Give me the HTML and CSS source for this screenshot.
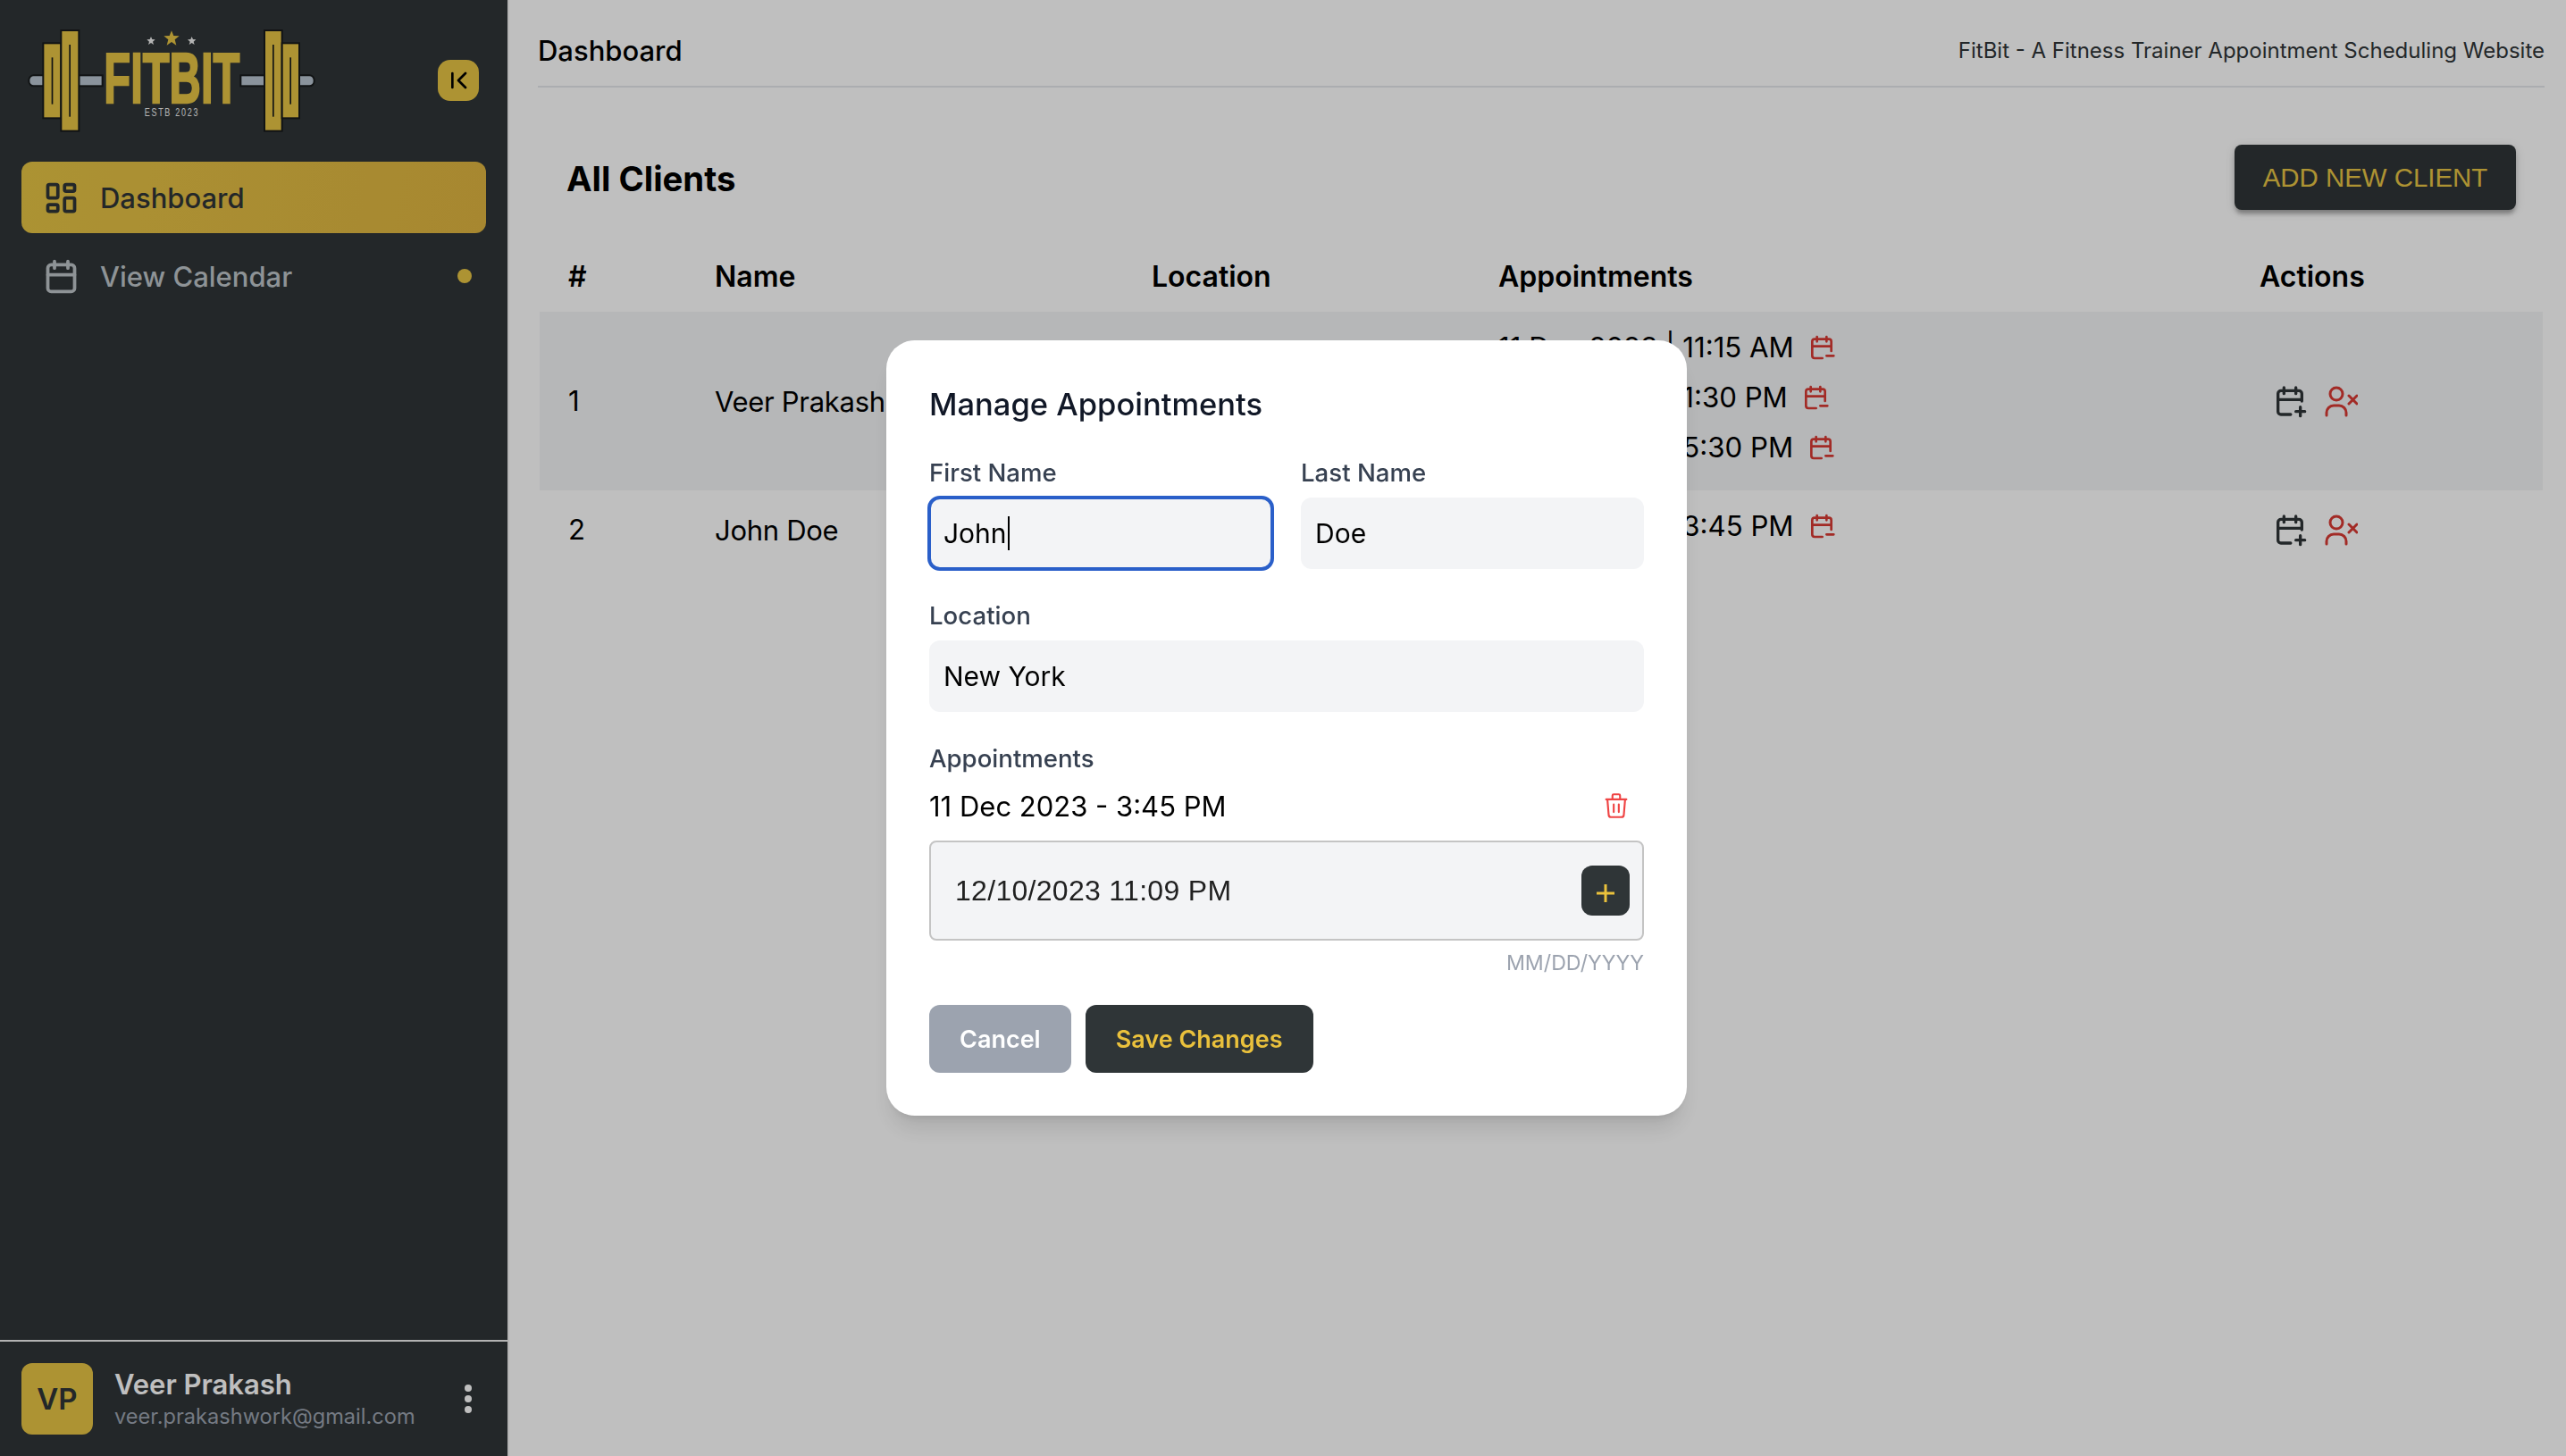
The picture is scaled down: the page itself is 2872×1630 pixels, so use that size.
FILE: index.html
```html
<!DOCTYPE html>
<html lang="en">
<head>
<meta charset="utf-8">
<title>FitBit</title>
<link rel="stylesheet" href="styles.css">
</head>
<body>
<div class="app">
  <aside class="sidebar">
    <div class="brand">
      <svg class="logo" viewBox="0 0 1020 420" aria-label="FitBit logo">
        <g class="logo-bar">
          <rect x="37" y="193" width="60" height="36" rx="16"/>
          <rect x="205" y="193" width="79" height="36"/>
          <rect x="748" y="193" width="80" height="36"/>
          <rect x="930" y="193" width="65" height="36" rx="16"/>
        </g>
        <g class="logo-plate">
          <rect x="85" y="85" width="60" height="252"/>
          <rect x="145" y="42" width="60" height="338"/>
          <rect x="828" y="42" width="59" height="338"/>
          <rect x="887" y="85" width="58" height="252"/>
        </g>
        <g class="logo-slot">
          <rect x="113" y="133" width="5" height="157"/>
          <rect x="172" y="90" width="5" height="242"/>
          <rect x="855" y="90" width="5" height="242"/>
          <rect x="913" y="133" width="5" height="157"/>
        </g>
        <polygon class="star-gold" points="516,43 523,60 542,61 527,73 532,92 516,81 500,92 505,73 490,61 509,60"/>
        <polygon class="star-grey" points="447,63 451,72 461,73 453,80 456,90 447,84 438,90 441,80 433,73 443,72"/>
        <polygon class="star-grey" points="584,63 588,72 598,73 590,80 593,90 584,84 575,90 578,80 570,73 580,72"/>
        <text class="logo-name" x="289" y="284" textLength="456" lengthAdjust="spacingAndGlyphs">FITBIT</text>
        <text class="logo-est" x="425" y="331" textLength="185" lengthAdjust="spacingAndGlyphs">ESTB 2023</text>
      </svg>
      <button class="collapse">
        <svg class="icon-collapse" viewBox="0 0 24 24"><path d="M7 6v12M18 6l-6 6l6 6"/></svg>
      </button>
    </div>
    <nav class="nav">
      <a class="nav-item active">
        <svg class="nav-icon" viewBox="0 0 24 24"><path d="M5 4h4a1 1 0 0 1 1 1v6a1 1 0 0 1-1 1H5a1 1 0 0 1-1-1V5a1 1 0 0 1 1-1z"/><path d="M5 16h4a1 1 0 0 1 1 1v2a1 1 0 0 1-1 1H5a1 1 0 0 1-1-1v-2a1 1 0 0 1 1-1z"/><path d="M15 12h4a1 1 0 0 1 1 1v6a1 1 0 0 1-1 1h-4a1 1 0 0 1-1-1v-6a1 1 0 0 1 1-1z"/><path d="M15 4h4a1 1 0 0 1 1 1v2a1 1 0 0 1-1 1h-4a1 1 0 0 1-1-1V5a1 1 0 0 1 1-1z"/></svg>
        <span>Dashboard</span>
      </a>
      <a class="nav-item">
        <svg class="nav-icon" viewBox="0 0 24 24"><path d="M4 7a2 2 0 0 1 2-2h12a2 2 0 0 1 2 2v12a2 2 0 0 1-2 2H6a2 2 0 0 1-2-2V7z"/><path d="M16 3v4M8 3v4M4 11h16"/></svg>
        <span>View Calendar</span>
        <i class="nav-dot"></i>
      </a>
    </nav>
    <div class="profile">
      <div class="avatar">VP</div>
      <div class="profile-text">
        <div class="profile-name">Veer Prakash</div>
        <div class="profile-mail">veer.prakashwork@gmail.com</div>
      </div>
      <div class="kebab"><i></i><i></i><i></i></div>
    </div>
  </aside>

  <main class="main">
    <header class="topbar">
      <div class="topbar-title">Dashboard</div>
      <div class="topbar-sub">FitBit - A Fitness Trainer Appointment Scheduling Website</div>
    </header>
    <div class="section-head">
      <h1 class="section-title">All Clients</h1>
      <button class="add-btn">ADD NEW CLIENT</button>
    </div>
    <table class="clients">
      <colgroup><col class="c1"><col class="c2"><col class="c3"><col class="c4"><col class="c5"></colgroup>
      <thead>
        <tr><th>#</th><th>Name</th><th>Location</th><th>Appointments</th><th>Actions</th></tr>
      </thead>
      <tbody>
        <tr class="hover">
          <td>1</td><td class="name">Veer Prakash</td><td>Mumbai</td>
          <td class="appts">
            <div class="appt">11 Dec 2023 | 11:15 AM <svg class="ic-min" viewBox="0 0 24 24"><path d="M12.5 21H6a2 2 0 0 1-2-2V7a2 2 0 0 1 2-2h12a2 2 0 0 1 2 2v8M16 3v4M8 3v4M4 11h16M16 19h6"/></svg></div>
            <div class="appt">11 Dec 2023 | 1:30 PM <svg class="ic-min" viewBox="0 0 24 24"><path d="M12.5 21H6a2 2 0 0 1-2-2V7a2 2 0 0 1 2-2h12a2 2 0 0 1 2 2v8M16 3v4M8 3v4M4 11h16M16 19h6"/></svg></div>
            <div class="appt">11 Dec 2023 | 5:30 PM <svg class="ic-min" viewBox="0 0 24 24"><path d="M12.5 21H6a2 2 0 0 1-2-2V7a2 2 0 0 1 2-2h12a2 2 0 0 1 2 2v8M16 3v4M8 3v4M4 11h16M16 19h6"/></svg></div>
          </td>
          <td>
            <div class="actions">
              <svg class="ic-plus" viewBox="0 0 24 24"><path d="M12.5 21H6a2 2 0 0 1-2-2V7a2 2 0 0 1 2-2h12a2 2 0 0 1 2 2v5M16 3v4M8 3v4M4 11h16M16 19h6M19 16v6"/></svg>
              <svg class="ic-user" viewBox="0 0 37 35"><circle cx="13" cy="9" r="7"/><path d="M2 33v-3a8 8 0 0 1 8-8h6a8 8 0 0 1 8 8v3M27 11l9 9M36 11l-9 9"/></svg>
            </div>
          </td>
        </tr>
        <tr class="plain">
          <td>2</td><td class="name">John Doe</td><td>New York</td>
          <td class="appts">
            <div class="appt">11 Dec 2023 | 3:45 PM <svg class="ic-min" viewBox="0 0 24 24"><path d="M12.5 21H6a2 2 0 0 1-2-2V7a2 2 0 0 1 2-2h12a2 2 0 0 1 2 2v8M16 3v4M8 3v4M4 11h16M16 19h6"/></svg></div>
          </td>
          <td>
            <div class="actions">
              <svg class="ic-plus" viewBox="0 0 24 24"><path d="M12.5 21H6a2 2 0 0 1-2-2V7a2 2 0 0 1 2-2h12a2 2 0 0 1 2 2v5M16 3v4M8 3v4M4 11h16M16 19h6M19 16v6"/></svg>
              <svg class="ic-user" viewBox="0 0 37 35"><circle cx="13" cy="9" r="7"/><path d="M2 33v-3a8 8 0 0 1 8-8h6a8 8 0 0 1 8 8v3M27 11l9 9M36 11l-9 9"/></svg>
            </div>
          </td>
        </tr>
      </tbody>
    </table>
  </main>
</div>

<div class="overlay">
  <div class="modal">
    <h2 class="modal-title">Manage Appointments</h2>
    <div class="field-row">
      <div class="field">
        <div class="label">First Name</div>
        <div class="input focus"><span>John</span><i class="caret"></i></div>
      </div>
      <div class="field">
        <div class="label">Last Name</div>
        <div class="input"><span>Doe</span></div>
      </div>
    </div>
    <div class="field">
      <div class="label">Location</div>
      <div class="input"><span>New York</span></div>
    </div>
    <div class="field">
      <div class="label">Appointments</div>
      <div class="appt-item">
        <span>11 Dec 2023 - 3:45 PM</span>
        <svg class="ic-trash" viewBox="0 0 24 24"><path d="M4 7h16M10 11v6M14 11v6M5 7l1 12a2 2 0 0 0 2 2h8a2 2 0 0 0 2-2l1-12M9 7V4a1 1 0 0 1 1-1h4a1 1 0 0 1 1 1v3"/></svg>
      </div>
      <div class="date-input">
        <span>12/10/2023 11:09 PM</span>
        <button class="date-add"><svg viewBox="0 0 20 20"><path d="M10 0v20M0 10h20"/></svg></button>
      </div>
      <div class="helper">MM/DD/YYYY</div>
    </div>
    <div class="modal-actions">
      <button class="btn btn-cancel">Cancel</button>
      <button class="btn btn-save">Save Changes</button>
    </div>
  </div>
</div>
</body>
</html>
```
FILE: styles.css
```css
* { box-sizing: border-box; }
html, body { margin: 0; height: 100%; }
body { font-family: Inter, "Liberation Sans", sans-serif; color: #000; background: #fff; overflow: hidden; }
svg { display: block; fill: none; }
button { font-family: inherit; border: 0; padding: 0; cursor: pointer; }

.app { display: flex; height: 1630px; }

/* sidebar */
.sidebar { width: 570px; flex: none; display: flex; flex-direction: column; background: #2f3537; border-right: 2px solid #efefef; }
.brand { display: flex; align-items: center; justify-content: space-between; padding: 20px 32px 21px 20px; }
.logo { width: 340px; height: 140px; }
.logo-bar rect { fill: #b8c5d0; stroke: #171a1b; stroke-width: 6; }
.logo-plate rect { fill: #e7c444; stroke: #171a1b; stroke-width: 6; }
.logo-slot rect { fill: #171a1b; }
.star-gold { fill: #e7c444; }
.star-grey { fill: #f0f0f0; }
.logo-name { font-family: "Liberation Sans", sans-serif; font-weight: 700; font-size: 238px; fill: #e7c444; stroke: #e7c444; stroke-width: 7; }
.logo-est { font-family: "Liberation Sans", sans-serif; font-size: 36px; letter-spacing: 7px; fill: #f0f0f0; }
.collapse { width: 46px; height: 46px; border-radius: 14px; background: #e7c444; display: flex; align-items: center; justify-content: center; }
.icon-collapse { width: 32px; height: 32px; stroke: #000; stroke-width: 2; stroke-linecap: round; stroke-linejoin: round; }

.nav { flex: 1; display: flex; flex-direction: column; gap: 8px; padding: 0 24px; }
.nav-item { height: 80px; display: flex; align-items: center; gap: 21px; padding: 0 16px 0 22px; border-radius: 12px; font-size: 31px; font-weight: 500; color: #bec4c9; }
.nav-item.active { background: linear-gradient(100deg, #e6c445, #dfb541); color: #2f3537; }
.nav-icon { width: 45px; height: 45px; flex: none; stroke: currentColor; stroke-width: 2; stroke-linecap: round; stroke-linejoin: round; }
.nav-dot { width: 16px; height: 16px; border-radius: 50%; background: #e7c444; margin-left: auto; }

.profile { display: flex; align-items: center; padding: 24px; border-top: 2px solid #efefef; height: 130px; }
.avatar { width: 80px; height: 80px; flex: none; border-radius: 12px; background: #e7c444; color: #2f3537; display: flex; align-items: center; justify-content: center; font-size: 33px; font-weight: 600; }
.profile-text { margin-left: 24px; flex: 1; }
.profile-name { font-size: 31px; font-weight: 600; line-height: 40px; color: #fff; }
.profile-mail { font-size: 23.6px; line-height: 32px; color: #9ca3af; }
.kebab { width: 8px; margin-right: 16px; display: flex; flex-direction: column; gap: 4px; }
.kebab i { display: block; width: 8px; height: 8px; border-radius: 50%; background: #fff; }

/* main */
.main { flex: 1; min-width: 0; padding: 0 24px 0 32px; }
.topbar { height: 98px; display: flex; align-items: center; justify-content: space-between; border-bottom: 2px solid #e5e7eb; padding-top: 16px; }
.topbar-title { font-size: 31px; font-weight: 500; }
.topbar-sub { font-size: 24px; color: #2f3537; }
.section-head { display: flex; align-items: center; justify-content: space-between; padding: 64px 32px 0 32px; }
.section-title { margin: 2px 0 0; font-size: 38.3px; font-weight: 700; }
.add-btn { width: 315px; height: 73px; border-radius: 8px; background: #2f3537; color: #e7c444; font-family: "Liberation Sans", sans-serif; font-size: 29.4px; box-shadow: 0 6px 4px -2px rgba(0,0,0,.2), 0 4px 6px rgba(0,0,0,.14), 0 2px 12px rgba(0,0,0,.12); }

.clients { width: 1242px; margin: 27px 0 0 2px; border-collapse: collapse; table-layout: fixed; font-size: 31.2px; }
.c1 { width: 164px; } .c2 { width: 489px; } .c3 { width: 388px; } .c4 { width: 852px; } .c5 { width: 349px; }
.clients th { text-align: left; font-size: 32px; font-weight: 600; height: 87px; padding: 7px 0 0 32px; }
.clients td { padding: 0 0 0 32px; vertical-align: middle; }
.clients td.name { font-size: 31px; letter-spacing: -.3px; }
.clients td.appts { padding-bottom: 8px; }
.clients tr.plain { height: 88px; }
.clients tr.hover { background: #f3f4f6; height: 200px; }
.appt { display: flex; align-items: center; gap: 15px; height: 56px; }
.ic-min { width: 32px; height: 32px; stroke: #d93a33; stroke-width: 2; stroke-linecap: round; stroke-linejoin: round; }
.actions { display: flex; align-items: center; gap: 19px; margin-left: 14px; }
.ic-plus { width: 40px; height: 40px; stroke: #2f3537; stroke-width: 2; stroke-linecap: round; stroke-linejoin: round; }
.ic-user { width: 37px; height: 35px; stroke: #d93a33; stroke-width: 3; stroke-linecap: round; stroke-linejoin: round; }

/* modal */
.overlay { position: fixed; inset: 0; background: rgba(0,0,0,.25); display: flex; align-items: center; justify-content: center; padding-left: 8px; }
.modal { width: 896px; background: #fff; border-radius: 32px; padding: 48px; display: flex; flex-direction: column; gap: 32px; box-shadow: 0 20px 25px -5px rgba(0,0,0,.1), 0 8px 10px -6px rgba(0,0,0,.1); }
.modal-title { margin: 0; font-size: 34.5px; line-height: 48px; font-weight: 500; color: #111827; }
.field-row { display: grid; grid-template-columns: 1fr 1fr; gap: 32px; }
.label { font-size: 27.6px; line-height: 40px; font-weight: 500; color: #374151; margin-bottom: 8px; }
.input { height: 80px; border-radius: 12px; background: #f3f4f6; display: flex; align-items: center; padding: 0 16px; font-size: 30px; color: #000; }
.input.focus { outline: 4px solid #2a5fc9; outline-offset: -2px; }
.caret { display: block; width: 2px; height: 38px; background: #000; margin-left: 1px; }
.appt-item { display: flex; align-items: center; justify-content: space-between; font-size: 31px; line-height: 48px; margin-bottom: 14px; padding-right: 14px; }
.appt-item span { padding-top: 2px; }
.ic-trash { width: 34px; height: 34px; stroke: #ef4444; stroke-width: 1.5; stroke-linecap: round; stroke-linejoin: round; }
.date-input { height: 112px; border: 2px solid #c4c4c4; border-radius: 8px; background: #f3f4f6; display: flex; align-items: center; justify-content: space-between; padding: 0 14px 0 27px; font-family: "Liberation Sans", sans-serif; font-size: 32px; letter-spacing: .3px; color: #212121; }
.date-add { width: 54px; height: 56px; border-radius: 12px; background: #2f3537; display: flex; align-items: center; justify-content: center; }
.date-add svg { width: 20px; height: 20px; stroke: #eac13c; stroke-width: 3; margin-top: 6px; }
.helper { text-align: right; font-size: 23.2px; line-height: 32px; color: #9ca3af; margin: 9px 0 -1px; }
.modal-actions { display: flex; gap: 16px; }
.btn { height: 76px; border-radius: 12px; font-size: 27px; font-weight: 600; padding: 0 34px; }
.btn-cancel { background: #9ca3af; color: #fff; }
.btn-save { background: #2f3537; color: #eac13c; }
```
